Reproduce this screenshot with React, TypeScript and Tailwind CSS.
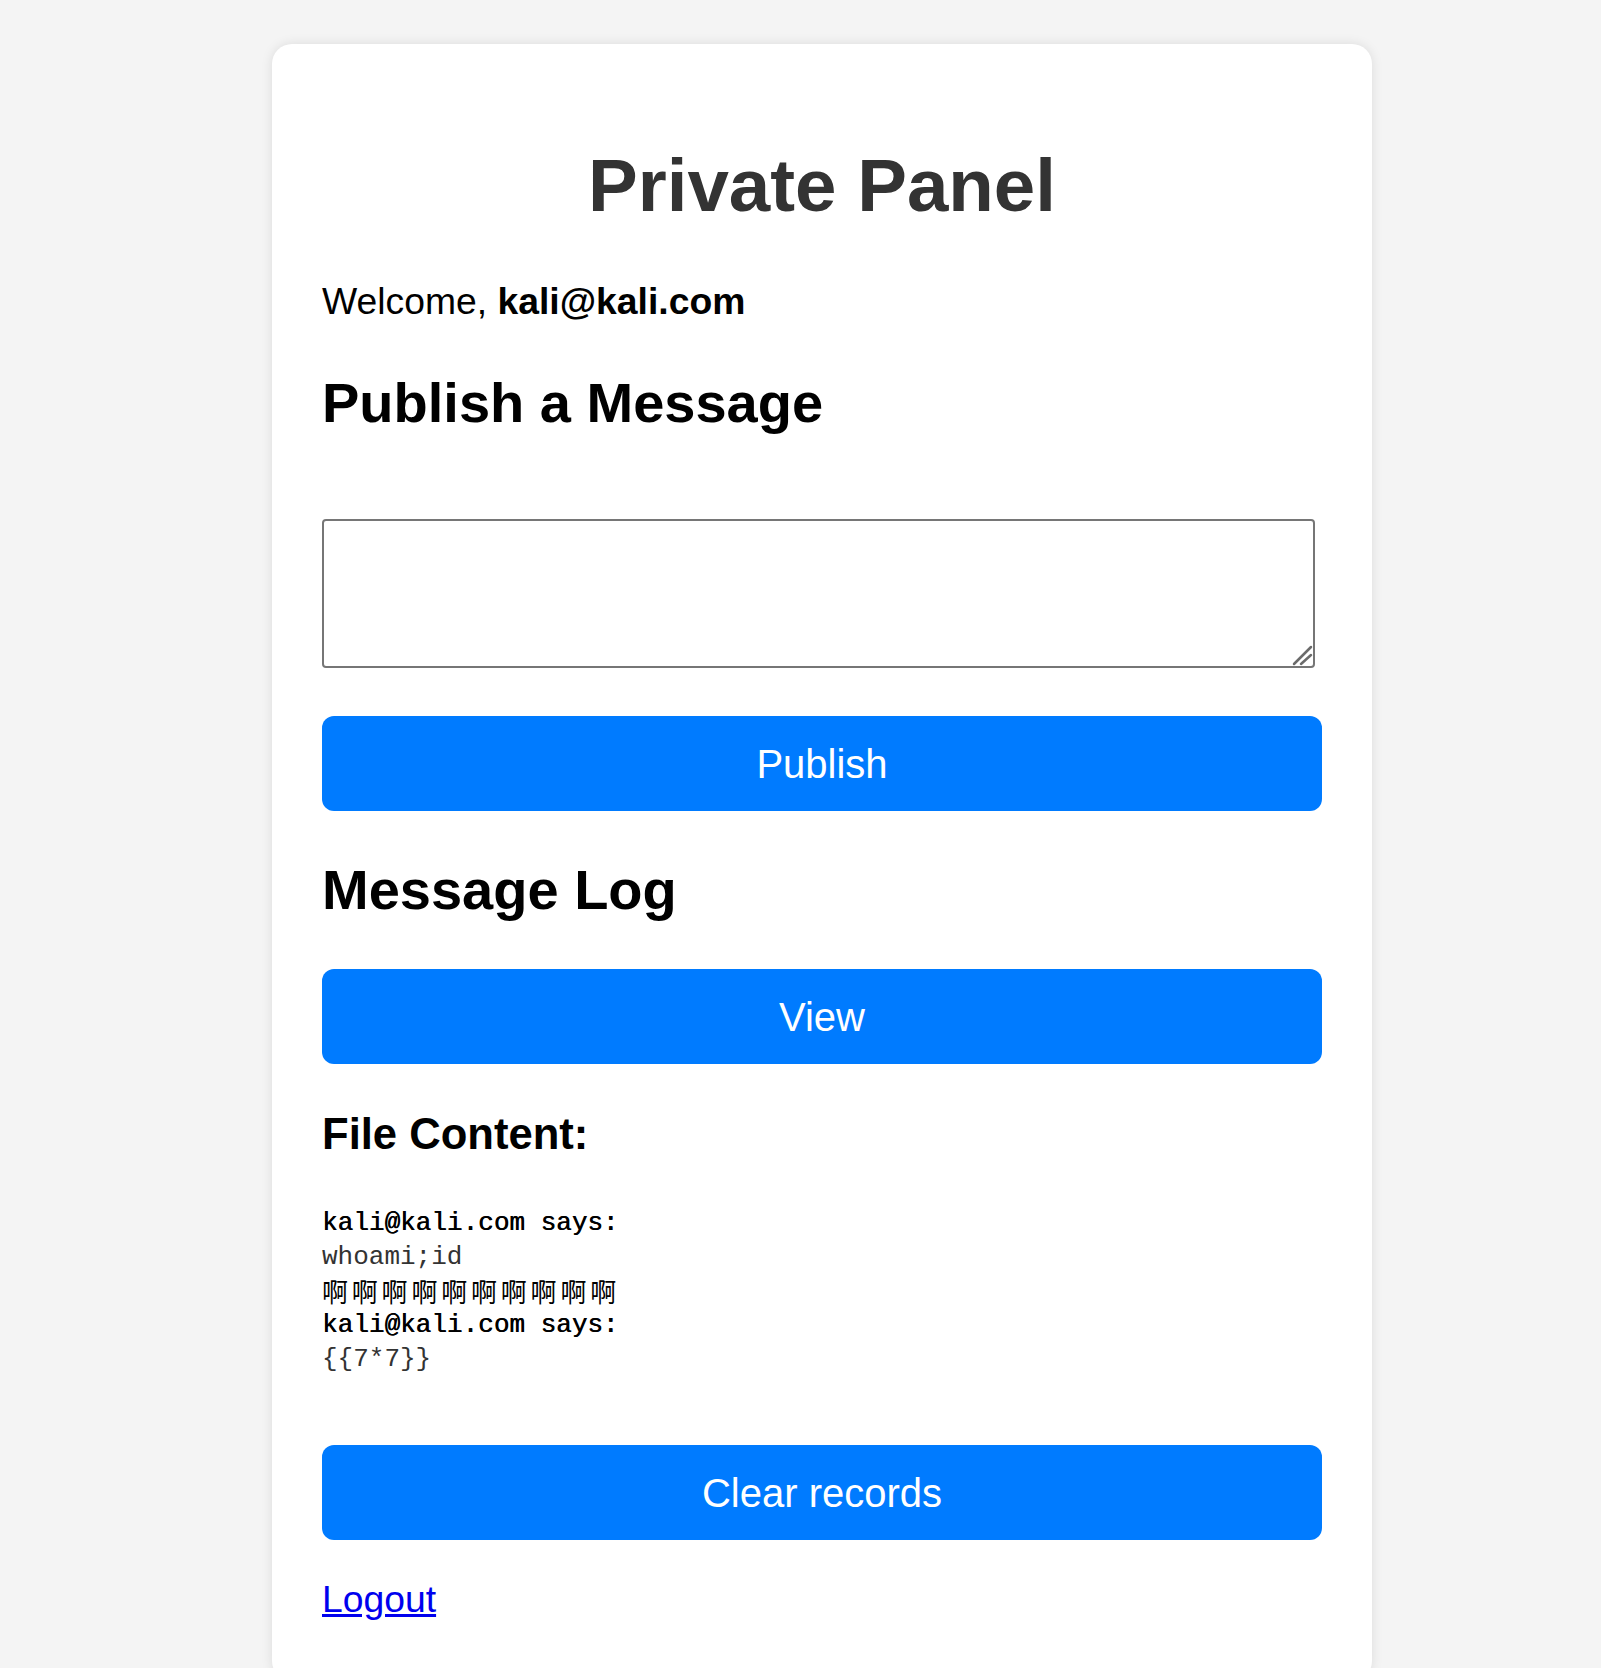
import { useState } from "react";

type Entry = { author: string; lines: { text: string; cjk?: boolean }[] };

const entries: Entry[] = [
  {
    author: "kali@kali.com",
    lines: [{ text: "whoami;id" }, { text: "啊啊啊啊啊啊啊啊啊啊", cjk: true }],
  },
  { author: "kali@kali.com", lines: [{ text: "{{7*7}}" }] },
];

function BlueButton({ label, className = "" }: { label: string; className?: string }) {
  return (
    <button
      type="button"
      className={`flex h-[95px] w-full items-center justify-center rounded-[12px] bg-[#007bff] text-[40px] text-white hover:bg-[#0069d9] ${className}`}
    >
      {label}
    </button>
  );
}

export default function App() {
  const [message, setMessage] = useState("");

  return (
    <div className="min-h-screen bg-[#f4f4f4] pt-[44px] font-['Liberation_Sans',Arial,sans-serif] text-black">
      <div className="ml-[272px] w-[1100px] rounded-[20px] bg-white px-[50px] pt-[50px] pb-[60px] shadow-[0_0_12px_rgba(0,0,0,0.1)]">
        <h1 className="mt-[49px] text-center text-[74.5px] font-bold leading-[86px] text-[#333]">
          Private Panel
        </h1>
        <p className="mt-[51px] text-[37.3px] leading-[43px]">
          Welcome, <strong>kali@kali.com</strong>
        </p>

        <h2 className="mt-[48px] text-[56px] font-bold leading-[64px]">Publish a Message</h2>
        <form onSubmit={(e) => e.preventDefault()}>
          <div className="relative mt-[84px] w-[993px]">
            <textarea
              value={message}
              onChange={(e) => setMessage(e.target.value)}
              className="block h-[149px] w-full resize-none rounded-[4px] border-2 border-[#767676] bg-white p-2 text-[26px]"
            />
            {/* oversized resize grip, like the zoomed browser one */}
            <svg
              className="pointer-events-none absolute right-0 bottom-0 h-6 w-6"
              viewBox="0 0 24 24"
              fill="none"
              stroke="#6b6b6b"
              strokeWidth="2.5"
              strokeLinecap="round"
            >
              <path d="M3 20L20 3" />
              <path d="M10 20L20 11" />
            </svg>
          </div>
          <BlueButton label="Publish" className="mt-[48px]" />
        </form>

        <h2 className="mt-[47px] text-[56px] font-bold leading-[64px]">Message Log</h2>
        <BlueButton label="View" className="mt-[47px]" />

        <h3 className="mt-[45px] text-[43.6px] font-bold leading-[50px]">File Content:</h3>
        <pre className="mt-[47px] font-['Liberation_Mono',monospace] text-[26px] leading-[34px]">
          {entries.map((en, i) => (
            <div key={i}>
              <div className="text-black [text-shadow:0.5px_0_0_#000]">{en.author} says:</div>
              {en.lines.map((l, j) =>
                l.cjk ? (
                  <div
                    key={j}
                    className="font-['Noto_Sans_CJK_SC',monospace] text-[26px] leading-[34px] tracking-[3.8px]"
                  >
                    {l.text}
                  </div>
                ) : (
                  <div key={j} className="text-[#333]">
                    {l.text}
                  </div>
                )
              )}
            </div>
          ))}
        </pre>

        <BlueButton label="Clear records" className="mt-[69px]" />

        <p className="mt-[38px] text-[37.3px] leading-[43px]">
          <a href="#" className="text-[#0000ee] underline">
            Logout
          </a>
        </p>
      </div>
    </div>
  );
}
